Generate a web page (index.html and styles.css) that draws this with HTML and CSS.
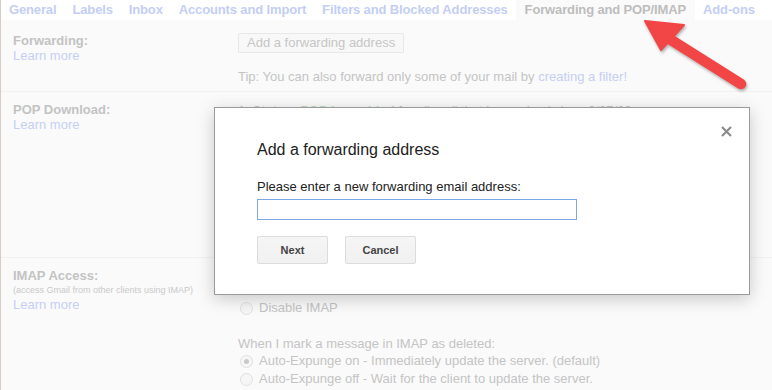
FILE: index.html
```html
<!DOCTYPE html>
<html lang="en">
<head>
<meta charset="utf-8">
<title>Settings - Forwarding and POP/IMAP</title>
<link rel="stylesheet" href="styles.css">
</head>
<body>
<div class="page">
  <nav class="tabs">
    <a class="tab">General</a>
    <a class="tab">Labels</a>
    <a class="tab">Inbox</a>
    <a class="tab">Accounts and Import</a>
    <a class="tab">Filters and Blocked Addresses</a>
    <a class="tab tab-active">Forwarding and POP/IMAP</a>
    <a class="tab">Add-ons</a>
  </nav>
  <main class="settings">
    <section class="row row-forward">
      <div class="label-col">
        <div class="label">Forwarding:</div>
        <a class="link">Learn more</a>
      </div>
      <div class="value-col">
        <span class="btn-dim">Add a forwarding address</span>
        <p class="tip">Tip: You can also forward only some of your mail by <a class="link">creating a filter!</a></p>
      </div>
    </section>
    <section class="row row-pop">
      <div class="label-col">
        <div class="label">POP Download:</div>
        <a class="link">Learn more</a>
      </div>
      <div class="value-col">
        <p class="status">1. <b>Status:</b> <span class="ok">POP is enabled</span> for all mail that has arrived since 9/27/09</p>
      </div>
    </section>
    <section class="row row-imap">
      <div class="label-col">
        <div class="label">IMAP Access:</div>
        <div class="small">(access Gmail from other clients using IMAP)</div>
        <a class="link">Learn more</a>
      </div>
      <div class="value-col">
        <label class="radio-row first"><span class="radio"></span>Disable IMAP</label>
        <p class="when">When I mark a message in IMAP as deleted:</p>
        <label class="radio-row"><span class="radio checked"></span>Auto-Expunge on - Immediately update the server. (default)</label>
        <label class="radio-row"><span class="radio"></span>Auto-Expunge off - Wait for the client to update the server.</label>
      </div>
    </section>
  </main>
</div>

<div class="dialog" role="dialog">
  <span class="close" aria-label="Close">
    <svg width="11" height="11" viewBox="0 0 11 11"><path d="M1 1 L10 10 M10 1 L1 10" stroke="#8c8c8c" stroke-width="2.2" fill="none"/></svg>
  </span>
  <h2 class="dialog-title">Add a forwarding address</h2>
  <div class="dialog-label">Please enter a new forwarding email address:</div>
  <input class="dialog-input" type="text">
  <div class="dialog-buttons">
    <button class="btn">Next</button>
    <button class="btn">Cancel</button>
  </div>
</div>

<svg class="arrow" width="772" height="390" viewBox="0 0 772 390">
  <line x1="668" y1="38" x2="741" y2="84" stroke="#f24545" stroke-width="10.5" stroke-linecap="round"/>
  <polygon points="645,21 684,25 661,50" fill="#f24545" stroke="#f24545" stroke-width="2" stroke-linejoin="round"/>
</svg>
</body>
</html>
```

FILE: styles.css
```css
html, body {
  margin: 0;
  padding: 0;
}
body {
  font-family: "Liberation Sans", Arial, sans-serif;
  font-size: 13px;
  background: #fafafa;
  border-left: 1px solid #d8cdc5;
  height: 390px;
  overflow: hidden;
  position: relative;
}
.page {
  display: flex;
  flex-direction: column;
}
.tabs {
  display: flex;
  height: 20px;
  background: #ffffff;
}
.tab {
  padding: 0 8px;
  line-height: 20px;
  font-weight: bold;
  color: #c4cef4;
  white-space: nowrap;
  letter-spacing: -0.14px;
}
.tab-active {
  color: #bdbdbd;
  background: #fafafa;
  padding: 0 9px;
}
.settings {
  display: flex;
  flex-direction: column;
}
.row {
  display: grid;
  grid-template-columns: 237px 1fr;
  border-bottom: 1px solid #f1f1f1;
  box-sizing: border-box;
  padding-top: 10px;
}
.row-forward {
  padding-top: 13px;
  padding-bottom: 7px;
}
.row-pop {
  height: 166px;
}
.row-imap {
  border-bottom: none;
}
.label-col {
  padding-left: 12px;
  display: flex;
  flex-direction: column;
  align-items: flex-start;
}
.label {
  font-weight: bold;
  color: #c3c3c3;
  line-height: 15px;
}
.link {
  color: #c6cff3;
  line-height: 15px;
}
.small {
  font-size: 9px;
  line-height: 14px;
  color: #c9c9c9;
}
.value-col {
  display: flex;
  flex-direction: column;
  align-items: flex-start;
  color: #c4c4c4;
}
.btn-dim {
  display: inline-block;
  line-height: 18px;
  padding: 0 8px;
  border: 1px solid #e8e8e8;
  background: #f8f8f8;
  color: #c6c6c6;
  border-radius: 1px;
}
.tip {
  margin: 16px 0 0;
  line-height: 15px;
}
.status {
  margin: 1px 0 0;
  line-height: 15px;
}
.status b {
  font-weight: bold;
}
.ok {
  color: #bcdcbe;
  font-weight: bold;
}
.radio-row {
  display: flex;
  align-items: center;
  gap: 6px;
  height: 18px;
  line-height: 18px;
  color: #c4c4c4;
}
.radio-row.first {
  margin-top: 31px;
}
.radio {
  width: 11px;
  height: 11px;
  margin-left: 2px;
  border: 1px solid #e0e0e0;
  border-radius: 50%;
  background: #f6f6f6;
  box-sizing: content-box;
  display: flex;
  align-items: center;
  justify-content: center;
}
.radio.checked::after {
  content: "";
  width: 5px;
  height: 5px;
  border-radius: 50%;
  background: #c9c9c9;
}
.when {
  margin: 19px 0 0;
  line-height: 16px;
}

.dialog {
  position: absolute;
  left: 213px;
  top: 107px;
  width: 536px;
  height: 188px;
  box-sizing: border-box;
  background: #ffffff;
  border: 1px solid #9a9a9a;
  box-shadow: 0 4px 16px rgba(0, 0, 0, 0.2);
  padding: 33px 42px;
  color: #222222;
}
.close {
  position: absolute;
  top: 18px;
  right: 17px;
  width: 11px;
  height: 11px;
  display: block;
}
.close svg {
  display: block;
}
.dialog-title {
  margin: 0;
  font-size: 16px;
  line-height: 18px;
  font-weight: normal;
  color: #222222;
}
.dialog-label {
  margin-top: 20px;
  line-height: 15px;
  font-size: 13px;
}
.dialog-input {
  display: block;
  margin: 5px 0 0;
  width: 320px;
  height: 21px;
  box-sizing: border-box;
  border: 1px solid #7ea5e6;
  padding: 0 4px;
  font-family: inherit;
  font-size: 13px;
  outline: none;
  background: #fff;
}
.dialog-buttons {
  display: flex;
  gap: 17px;
  margin-top: 16px;
}
.btn {
  width: 71px;
  height: 28px;
  box-sizing: border-box;
  border: 1px solid #dcdcdc;
  border-radius: 2px;
  background: linear-gradient(#f5f5f5, #f1f1f1);
  color: #444444;
  font-family: inherit;
  font-weight: bold;
  font-size: 11px;
  padding: 0;
}

.arrow {
  position: absolute;
  left: -1px;
  top: 0;
  pointer-events: none;
  filter: drop-shadow(1px 2px 1.5px rgba(0, 0, 0, 0.3));
}
```
